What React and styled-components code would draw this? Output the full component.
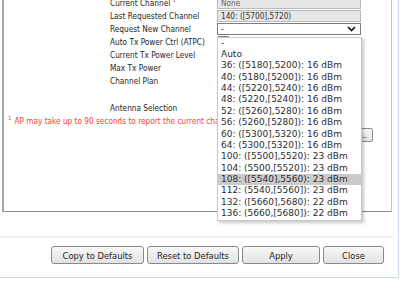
import styled, { createGlobalStyle } from "styled-components";

const GlobalStyle = createGlobalStyle`
  html, body {
    margin: 0;
    padding: 0;
    background: #fff;
  }
  body {
    font-family: "DejaVu Sans Condensed", "DejaVu Sans", sans-serif;
    font-stretch: condensed;
  }
`;

const Frame = styled.div`
  position: relative;
  width: 399px;
  height: 278px;
  box-sizing: border-box;
  border-right: 1px solid #cdd8e8;
  border-bottom: 1px solid #cdd8e8;
  overflow: hidden;
  background: #fff;
`;

// the settings fieldset, scrolled so its top is out of view
const Panel = styled.div`
  margin: -24px 0 0 2px;
  width: 390px;
  height: 236px;
  box-sizing: border-box;
  padding-top: 20px;
  border-left: 2px solid #a6a6a6;
  border-right: 1px solid #c4c4c4;
  border-bottom: 1px solid #8f8f8f;
`;

const Row = styled.div`
  display: grid;
  grid-template-columns: 107px 144px;
  align-items: center;
  height: ${(p) => p.$h || 13}px;
  padding-left: 106px;
`;

const Label = styled.span`
  font-size: 8.2px;
  color: #262626;
  white-space: nowrap;
`;

const Sup = styled.sup`
  color: #ff3b3b;
  font-size: 6px;
  vertical-align: top;
  margin-left: 2px;
  position: relative;
  top: -2px;
`;

const Field = styled.div`
  height: 12px;
  box-sizing: border-box;
  border: 1px solid #b9b9b9;
  background: #e7e7e7;
  padding: 0 3px;
  font-size: 8.2px;
  line-height: 10px;
  color: ${(p) => p.$color || "#333"};
  white-space: nowrap;
`;

const Select = styled.div`
  position: relative;
  height: 12px;
  box-sizing: border-box;
  border: 1px solid #7d7d7d;
  background: #fff;
  padding: 0 4px 0 3px;
  display: flex;
  align-items: center;
  justify-content: space-between;
  font-size: 8.2px;
  color: #222;
`;

const Check = styled.div`
  width: 11px;
  height: 11px;
  margin-left: 1px;
  box-sizing: border-box;
  border: 1px solid #8a8a8a;
  background: #f4f4f4;
`;

const Menu = styled.ul`
  position: absolute;
  z-index: 5;
  top: 13px;
  left: -1px;
  width: 145px;
  margin: 0;
  padding: 0;
  list-style: none;
  box-sizing: border-box;
  border: 1px solid #c9c9c9;
  background: #fff;
  box-shadow: 2px 2px 3px rgba(0, 0, 0, 0.22);
`;

const Option = styled.li`
  height: 11.375px;
  line-height: 11.375px;
  padding-left: 3px;
  font-family: "DejaVu Sans", sans-serif;
  font-stretch: normal;
  font-size: 9px;
  color: #2e2e2e;
  white-space: nowrap;
  background: ${(p) => (p.$active ? "#cbcbcb" : "transparent")};
`;

const Note = styled.div`
  height: 10px;
  padding-left: 4px;
  font-size: 8.2px;
  line-height: 10px;
  color: #ff3b3b;
  white-space: nowrap;
`;

const NoteMark = styled.sup`
  font-size: 6px;
  vertical-align: top;
  position: relative;
  top: -3px;
  margin-right: 3px;
`;

const ToolRow = styled.div`
  display: flex;
  justify-content: flex-end;
  margin-top: 2px;
  padding-right: 18px;
`;

const SmallButton = styled.button`
  width: 40px;
  height: 14px;
  padding: 0 5px 0 0;
  box-sizing: border-box;
  border: 1px solid #8c8c8c;
  border-radius: 2px;
  background: linear-gradient(#f7f7f7, #e3e3e3);
  font-family: inherit;
  font-stretch: inherit;
  font-size: 8.2px;
  color: #222;
  text-align: right;
`;

const Footer = styled.div`
  padding-top: 24px;
`;

const Separator = styled.div`
  margin-right: 5px;
  border-top: 2px solid #efefef;
`;

const ButtonBar = styled.div`
  display: flex;
  justify-content: flex-end;
  gap: 3px;
  margin-top: 8px;
  padding-right: 14px;
`;

const Button = styled.button`
  width: ${(p) => p.$w}px;
  height: 18px;
  margin-left: ${(p) => p.$gap || 0}px;
  box-sizing: border-box;
  border: 1px solid #8a8a8a;
  border-radius: 3px;
  background: linear-gradient(#f8f8f8, #e2e2e2);
  font-family: inherit;
  font-stretch: inherit;
  font-size: 9.3px;
  color: #1f1f1f;
  padding: 0;
`;

const Chevron = () => (
  <svg width="9" height="6" viewBox="0 0 9 6">
    <polyline points="1,1 4.5,4.5 8,1" fill="none" stroke="#111" strokeWidth="1.7" />
  </svg>
);

const channels = [
  "-",
  "Auto",
  "36: ([5180],5200): 16 dBm",
  "40: (5180,[5200]): 16 dBm",
  "44: ([5220],5240): 16 dBm",
  "48: (5220,[5240]): 16 dBm",
  "52: ([5260],5280): 16 dBm",
  "56: (5260,[5280]): 16 dBm",
  "60: ([5300],5320): 16 dBm",
  "64: (5300,[5320]): 16 dBm",
  "100: ([5500],5520): 23 dBm",
  "104: (5500,[5520]): 23 dBm",
  "108: ([5540],5560): 23 dBm",
  "112: (5540,[5560]): 23 dBm",
  "132: ([5660],5680): 22 dBm",
  "136: (5660,[5680]): 22 dBm",
];

export default function App() {
  return (
    <>
      <GlobalStyle />
      <Frame>
        <Panel>
          <Row>
            <Label>
              Current Channel<Sup>1</Sup>
            </Label>
            <Field $color="#6a6a6a">None</Field>
          </Row>
          <Row>
            <Label>Last Requested Channel</Label>
            <Field>140: ([5700],5720)</Field>
          </Row>
          <Row>
            <Label>Request New Channel</Label>
            <Select>
              <span>-</span>
              <Chevron />
              <Menu>
                {channels.map((c) => (
                  <Option key={c} $active={c.startsWith("108")}>
                    {c}
                  </Option>
                ))}
              </Menu>
            </Select>
          </Row>
          <Row>
            <Label>Auto Tx Power Ctrl (ATPC)</Label>
            <Check />
          </Row>
          <Row>
            <Label>Current Tx Power Level</Label>
          </Row>
          <Row>
            <Label>Max Tx Power</Label>
          </Row>
          <Row>
            <Label>Channel Plan</Label>
          </Row>
          <Row />
          <Row $h={16}>
            <Label>Antenna Selection</Label>
          </Row>
          <Note>
            <NoteMark>1</NoteMark>AP may take up to 90 seconds to report the current channel
          </Note>
          <ToolRow>
            <SmallButton>...</SmallButton>
          </ToolRow>
        </Panel>
        <Footer>
          <Separator />
          <ButtonBar>
            <Button $w={93}>Copy to Defaults</Button>
            <Button $w={92}>Reset to Defaults</Button>
            <Button $w={78}>Apply</Button>
            <Button $w={61}>Close</Button>
          </ButtonBar>
        </Footer>
      </Frame>
    </>
  );
}
